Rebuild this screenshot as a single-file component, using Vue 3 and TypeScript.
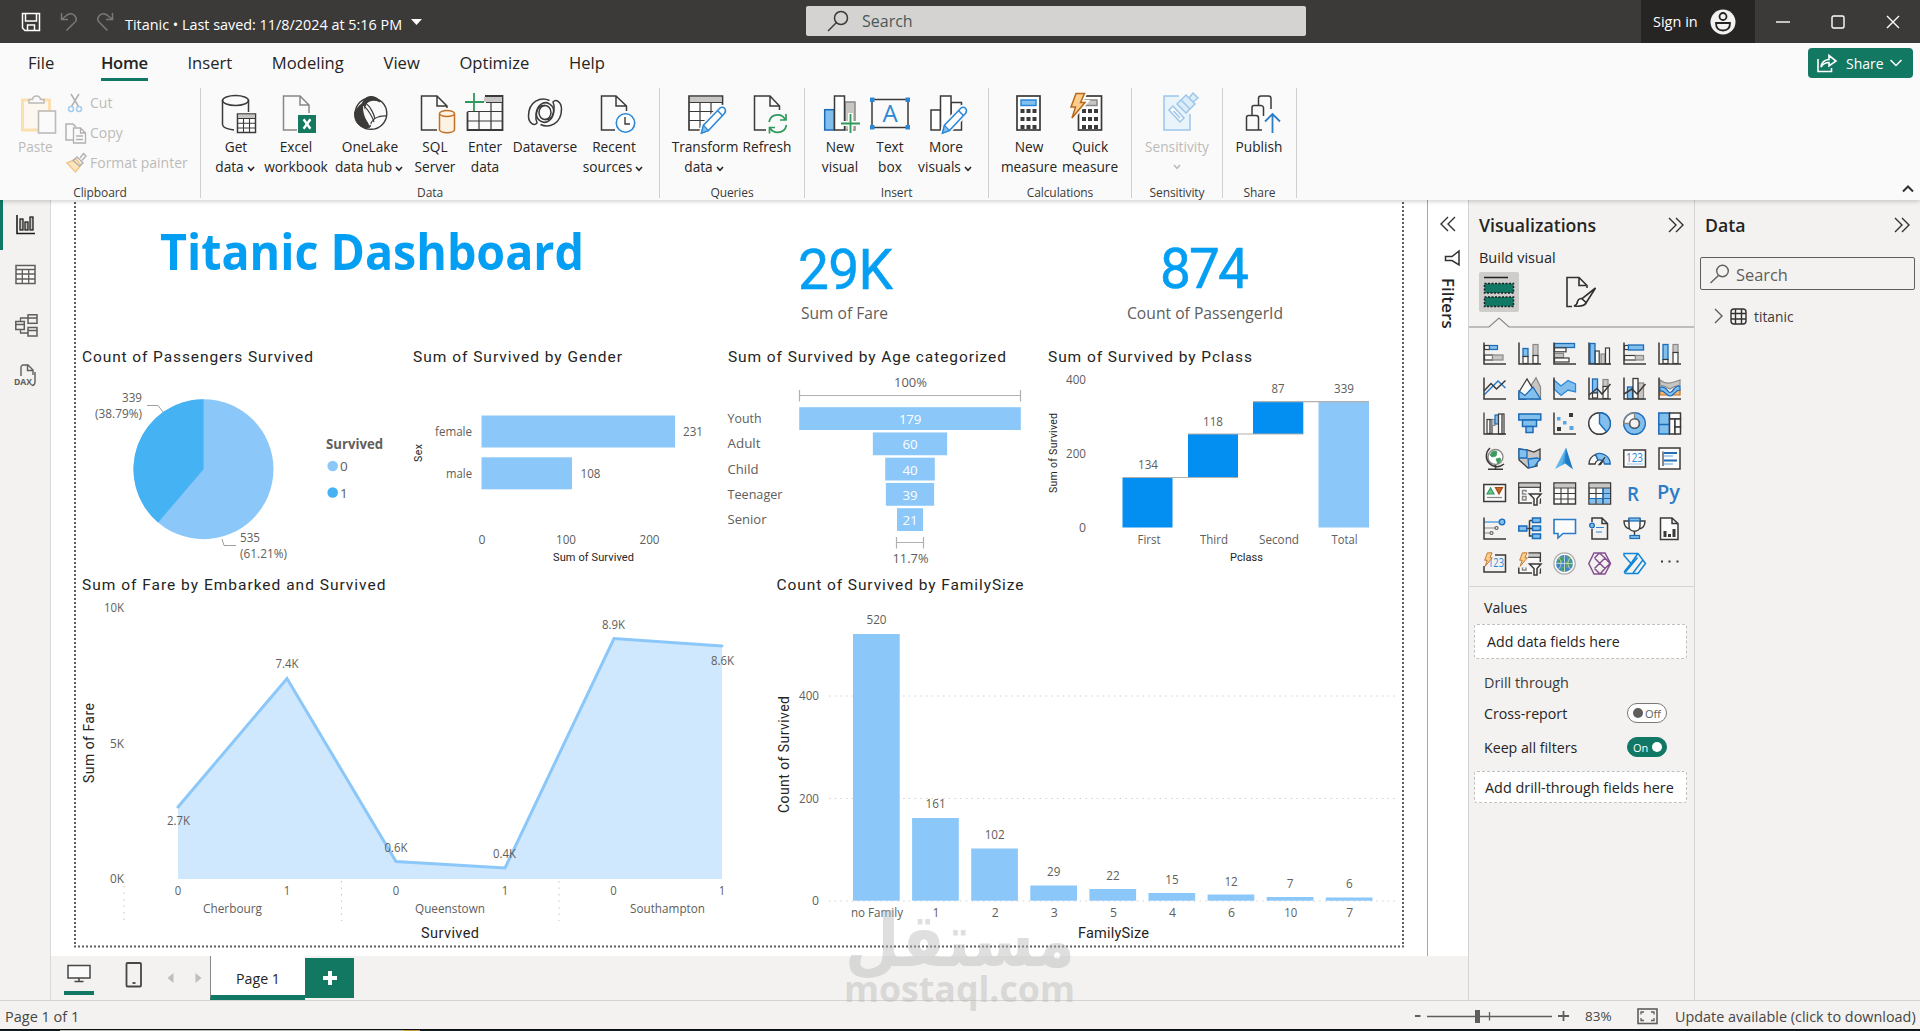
<script setup lang="ts">
interface RibbonItem { icon: string; lines: string[]; w: number; ml: number; caret?: boolean; off?: boolean }
interface RibbonGroup { name: string; w: number; items: RibbonItem[] }

const K = '#3b3a39'
const B = '#1a6bb8'
const LB = '#83bfec'
const G = '#c8c6c4'
const DG = '#8a8886'
const W = '#fbfbfb'

const rect = (x: number, y: number, w: number, h: number, fill = 'none', stroke = 'none', sw = 1.5): string =>
  `<rect x="${x}" y="${y}" width="${w}" height="${h}" fill="${fill}" stroke="${stroke}" stroke-width="${sw}"/>`
const path = (d: string, stroke = K, fill = 'none', sw = 1.5): string =>
  `<path d="${d}" fill="${fill}" stroke="${stroke}" stroke-width="${sw}"/>`
const dot = (x: number, y: number, r: number, fill = 'none', stroke = 'none', sw = 1.5): string =>
  `<circle cx="${x}" cy="${y}" r="${r}" fill="${fill}" stroke="${stroke}" stroke-width="${sw}"/>`

const pencil = path('M18.5 41L20.5 33.2L36.8 16.2Q39.4 14.4 41.6 16.4Q43.4 18.6 41.6 21.2L25.4 38.6Z', '#fafafa', '#fafafa', 5)
  + path('M18.5 41L20.5 33.2L36.8 16.2Q39.4 14.4 41.6 16.4Q43.4 18.6 41.6 21.2L25.4 38.6Z', '#2b88d8', '#fff', 1.5)
  + path('M18.5 41L20.5 33.2L25.4 38.6Z', '#2b88d8', LB, 1.2) + path('M34.5 18.5L39.4 23.6', '#2b88d8')
const keypad = (x: number, y: number): string => {
  let s = ''
  for (let r = 0; r < 3; r++) for (let c = 0; c < 3; c++) s += rect(x + c * 6, y + r * 8, 4, 4, K)
  return s
}
const bolt = (s: number): string =>
  `<g transform="scale(${s})">` + path('M8 1.5H16.5L12.5 10.5H17L4 26L7.5 15H3Z', '#b8681c', '#fbcf8b', 1.5) + '</g>'

const ribbonIcons: Record<string, string> = {
  getdata: path('M8.5 8V32.5Q9 36.8 20 38M34.5 8V20') + `<ellipse cx="21.5" cy="8.5" rx="13" ry="5" fill="none" stroke="${K}" stroke-width="1.5"/>`
    + rect(23.5, 22, 18, 18.5, '#fff', K) + rect(24, 22.5, 17, 3.5, G) + path('M23.5 26.5H41.5M23.5 31.3H41.5M23.5 36H41.5M29.5 26V40M35.5 26V40', K, 'none', 1.1),
  excel: path('M23 38H9.5V4H26L35 13V21M26 4V13H35', DG) + rect(24, 23, 18, 18, '#15795f')
    + path('M29.6 27.2L36.4 36.8M36.4 27.2L29.6 36.8', '#fff', 'none', 2.4),
  onelake: dot(23, 21.5, 15.8, 'none', K, 1.4) + path('M23 4.5C29 4.5 32 9 32 10C27 7 21 8 18 12C15 18 17 28 22 35C19 38 6 35 6.5 21C7 18 12 13 14.5 11C16 7 19 4.5 23 4.5Z', K, K, 1)
    + path('M14 13C19 15 25 26 26 30M22 35C23 27 30 23.5 39 24M18.5 12C22 14 26 22 27 27', K, 'none', 1.2) + path('M15.5 14C15 21 18 29 23 33', '#fafafa', '#fafafa', .8),
  sql: path('M24 38H8.5V4H24L34 14V16M24 4V14H34') + path('M26.5 22V38C28 41.5 40 41.5 41.5 38V22', '#c27022', '#fdf3e4')
    + `<ellipse cx="34" cy="21.5" rx="7.5" ry="3" fill="#fdf3e4" stroke="#c27022" stroke-width="1.5"/>`,
  enter: path('M4.5 20V38H39.5V4H22', K, 'none', 1.8) + rect(21, 5, 18, 5, G) + path('M23 10.5H39M4.5 19.5H39M4.5 29H39M16 19V38M28 10V38', K, 'none', 1.2)
    + path('M11 1V19M2 10H21', '#2f9a5b', 'none', 1.8),
  dataverse: `<g fill="none" stroke="${K}" stroke-width="1.5"><ellipse cx="22" cy="20.5" rx="6" ry="7"/><path d="M26.5 8.5C18 4.5 5.5 9 5.5 24C5.5 31 11 34.5 14 31C12 27 12.5 17 17 13C23 7.5 31.5 13 30.5 20C29.5 27 25 28 22 27.5"/><path d="M17.5 32.5C26 36.5 38.5 32 38.5 17C38.5 10 33 6.5 30 10C32 14 31.5 24 27 28C21 33.5 12.5 28 13.5 21C14.5 14 19 13 22 13.5"/></g>`,
  recent: path('M23 38H9.5V4H24L34.5 14V19M24 4V14H34.5') + dot(33.5, 31, 9.2, '#fff', '#2b88d8', 1.6) + path('M33 25V32H38', K, 'none', 1.4),
  transform: path('M18 38H6V4H39.5V17', K, '#fff', 1.7) + rect(7, 5, 31.5, 5, G) + path('M6 10.5H39.5M6 19.5H36M6 28.5H24M17 10.5V36M28 10.5V24', K, 'none', 1.2) + pencil,
  refresh: path('M21 38H9.5V4H25L34.5 14V18M25 4V14H34.5') + path('M24 30C25 25 28 22.8 32.5 22.8C36 22.8 39 25 40 27.5M41 22V28H35M41.5 33C40.5 38 37 40.3 32.5 40.3C29 40.3 26.5 38.5 25 36M24.5 41.5V35.5H30', '#2f9a5b', 'none', 1.7),
  newvisual: rect(6.7, 17.7, 9.5, 20.3, LB, B) + rect(27, 10, 10, 28, G, DG) + rect(16.5, 4, 10, 34, '#fff', K) + rect(22, 29, 21, 5, '#fafafa') + rect(30, 21, 5, 21, '#fafafa') + path('M32.5 22V41M23 31.5H42', '#2f9a5b', 'none', 1.8),
  textbox: rect(4, 7.5, 36, 28, '#fafafa', K) + rect(2, 5.5, 4.5, 4.5, '#2b88d8') + rect(37.5, 5.5, 4.5, 4.5, '#2b88d8') + rect(2, 33, 4.5, 4.5, '#2b88d8') + rect(37.5, 33, 4.5, 4.5, '#2b88d8')
    + '<text x="22" y="30" font-size="24" text-anchor="middle" fill="#2b88d8" font-family="Open Sans, sans-serif">A</text>',
  morevisuals: rect(7, 18, 9.5, 20, '#fff', K) + rect(27, 10.5, 10.5, 27.5, '#fff', K) + rect(16.5, 4, 10.5, 34, '#fff', K) + pencil,
  measure: rect(10, 4, 23, 34, '#fff', K, 1.7) + rect(14, 8, 15, 5.5, LB, '#2b88d8') + keypad(13.5, 17),
  quick: rect(10.5, 4, 23, 34, '#fff', K, 1.7) + rect(14, 8, 15, 5.5, G, DG) + keypad(14, 17) + path('M8 1.5H16.5L12.5 10.5H17L4 26L7.5 15H3Z', '#fafafa', '#fafafa', 5) + bolt(1),
  sensitivity: `<g opacity=".45">` + path('M24 4H9V38H35V22', '#2b88d8', '#d6ebfa') + path('M14 18L18 14L29 26L25 30Z', '#2b88d8', '#fff') + path('M18.5 19L25 26', '#2b88d8') + path('M22 12L31 3L40 12L31 21ZM26 8L35 17M34 6L38 1L43 6L38 10', '#2b88d8', '#bcdff7') + '</g>',
  publish: path('M25 38H9.5V25.5Q9.5 23.5 11.5 23.5H19Q21.5 23.5 21.5 26V38M15 23V15.5Q15 13.5 17 13.5H24Q26 13.5 26.5 15.5V24M21.5 13V6.5Q21.5 4 24 4H31.5Q34 4 34 6.5V17') + path('M35.5 41V22M28 29.5L35.5 22L43 29.5', '#2b7cc9', 'none', 1.8),
}

const groups: RibbonGroup[] = [
  { name: 'Data', w: 459, items: [
    { icon: 'getdata', lines: ['Get', 'data'], w: 44, ml: 13, caret: true },
    { icon: 'excel', lines: ['Excel', 'workbook'], w: 66, ml: 5 },
    { icon: 'onelake', lines: ['OneLake', 'data hub'], w: 72, ml: 5, caret: true },
    { icon: 'sql', lines: ['SQL', 'Server'], w: 40, ml: 9 },
    { icon: 'enter', lines: ['Enter', 'data'], w: 34, ml: 13 },
    { icon: 'dataverse', lines: ['Dataverse'], w: 64, ml: 11 },
    { icon: 'recent', lines: ['Recent', 'sources'], w: 62, ml: 6, caret: true },
  ] },
  { name: 'Queries', w: 145, items: [
    { icon: 'transform', lines: ['Transform', 'data'], w: 64, ml: 13, caret: true },
    { icon: 'refresh', lines: ['Refresh'], w: 50, ml: 5 },
  ] },
  { name: 'Insert', w: 184, items: [
    { icon: 'newvisual', lines: ['New', 'visual'], w: 36, ml: 17 },
    { icon: 'textbox', lines: ['Text', 'box'], w: 30, ml: 17 },
    { icon: 'morevisuals', lines: ['More', 'visuals'], w: 58, ml: 12, caret: true },
  ] },
  { name: 'Calculations', w: 143, items: [
    { icon: 'measure', lines: ['New', 'measure'], w: 56, ml: 12 },
    { icon: 'quick', lines: ['Quick', 'measure'], w: 56, ml: 5 },
  ] },
  { name: 'Sensitivity', w: 91, items: [
    { icon: 'sensitivity', lines: ['Sensitivity', ''], w: 68, ml: 11, caret: true, off: true },
  ] },
  { name: 'Share', w: 74, items: [
    { icon: 'publish', lines: ['Publish'], w: 50, ml: 11 },
  ] },
]

const tabs: string[] = ['File', 'Home', 'Insert', 'Modeling', 'View', 'Optimize', 'Help']

const railIcons: string[] = [
  path('M2 1V19.5H20', '#201f1e', 'none', 1.6) + rect(5, 5, 3, 11, G, '#201f1e', 1.3) + rect(10, 8, 3, 8, G, '#201f1e', 1.3) + rect(15, 3, 3, 13, G, '#201f1e', 1.3),
  rect(1, 1.5, 19, 18, '#fafafa', '#605e5c', 1.5) + path('M1 5.5H20M1 10H20M1 15H20M7.3 5V19M13.7 5V19', '#605e5c', 'none', 1.3),
  rect(.8, 7.5, 8.5, 8, 'none', '#605e5c') + rect(13, .8, 9, 8.5, 'none', '#605e5c') + rect(13, 13.5, 9, 8.5, 'none', '#605e5c') + path('M1 10.5H9M13 4H22M13 16.5H22M5.5 7V4H13M5.5 15.5V19H13', '#605e5c', 'none', 1.3),
  path('M6 12V3.5Q6 1 8.5 1H13L18 6V11M12.5 1V6.5H18M20 8V18Q20 21.5 16.500 21.500', '#605e5c', 'none', 1.4) + '<text x="-1" y="21" font-size="9" font-weight="700" textLength="18" lengthAdjust="spacingAndGlyphs" fill="#605e5c" font-family="Open Sans, sans-serif">DAX</text>',
]

const axis = path('M1 .5V22H23')
const cardText = (x: number, w: number): string => `<text x="${x}" y="14.5" font-size="12" textLength="${w}" lengthAdjust="spacingAndGlyphs" fill="#2b88d8" font-family="Open Sans, sans-serif">123</text>`
const slicer = rect(.8, 1, 21.5, 20, W, K) + rect(1.5, 1.7, 20, 3, G) + path('M1 5.3H22', K, 'none', 1.2) + rect(4.5, 8.5, 3.5, 3.5, 'none', DG) + rect(4.5, 14.5, 3.5, 3.5, 'none', DG)
  + path('M11 12H23.5L19.5 17V23.5H16V17Z', '#f3f2f1', '#f3f2f1', 4) + path('M11.5 12H23L19 16.5V23H16V16.5Z', K, W)

const vizIcons: string[] = [
  rect(1.5, 3.5, 5, 4, W, K, 1.2) + rect(6.5, 3.5, 8, 4, LB, B, 1.2) + rect(1.5, 13, 8, 5, W, K, 1.2) + rect(9.5, 13, 10.5, 5, G, DG, 1.2) + axis,
  rect(5, 6.5, 5, 8, LB, B, 1.3) + rect(5, 14.5, 5, 7, W, K, 1.2) + rect(15, 2.5, 5, 11, G, DG, 1.2) + rect(15, 13.5, 5, 8, W, K, 1.2) + axis,
  rect(1.5, 1.5, 20, 4, LB, B, 1.3) + rect(1.5, 5.8, 11.5, 4, W, K, 1.2) + rect(1.5, 11.5, 9, 4, G, DG, 1.2) + rect(1.5, 16, 14.5, 4, W, K, 1.2) + axis,
  rect(2, 1.5, 5, 20, LB, B, 1.3) + rect(7.2, 9, 4, 13, W, K, 1.2) + rect(13, 12, 4, 10, G, DG, 1.2) + rect(17.5, 6, 4, 16, W, K, 1.2) + axis,
  rect(1.5, 3.5, 4, 4, W, K, 1.2) + rect(5.5, 3, 15, 5, LB, B, 1.3) + rect(1.5, 13.5, 11, 4.5, W, K, 1.2) + rect(12.5, 13.5, 8, 4.5, G, DG, 1.2) + axis,
  rect(5, 2.5, 5, 15, LB, B, 1.3) + rect(5, 17.5, 5, 4, W, K, 1.2) + rect(15, 2.5, 5, 8, G, DG, 1.2) + rect(15, 10.5, 5, 11, W, K, 1.2) + axis,

  path('M1 18L15 4L22.5 11', '#2b7cc9') + path('M1 14L8 6.5L13.5 12L22.5 3.5') + axis,
  path('M12 10L18 .8L22.5 10V22H12Z', DG, G, 1.2) + path('M1 15L9 2L15 12L8 22H1Z', K, W, 1.3) + path('M1 14L7 18.5L15 10L22.5 22H1Z', B, LB, 1.3),
  path('M1 3L8 9L15 3.5L22.5 7V15L15 13L8 18.5L1 12Z', '#2b88d8', LB, 1.3) + axis,
  rect(4.5, 2, 5, 14, LB, B, 1.3) + rect(4.5, 16, 5, 5, W, K, 1.2) + rect(15, 2.5, 5, 7, G, DG, 1.2) + rect(15, 9.5, 5, 12, W, K, 1.2) + path('M1 18L9 11.5L14 17L22.5 7') + axis,
  rect(4.5, 10, 5, 12, LB, B, 1.3) + rect(15, 6, 5.5, 16, G, DG, 1.2) + rect(10, 1.5, 5, 20, W, K, 1.3) + path('M1 17L9 12L14 17L22.5 7') + axis,
  path('M2 13H8L12 17L16 12L22 13V18H2Z', '#c27022', '#f5b878', 1.2) + path('M2 3Q7 7 12 6T22 3V8Q16 9 12 12Q7 9 2 8Z', DG, G, 1.2) + path('M2 10C9 9 9 15 12 15.5C16 15.5 15 8.5 22 9V13C17 12.5 17 18.5 12 19C7 18.5 7 13 2 14Z', B, LB, 1.2) + axis,

  rect(4, 7.5, 5, 14, W, K, 1.2) + rect(9, 7.5, 3, 6, G, DG, 1) + rect(12, 3, 3.5, 9, LB, B, 1.2) + rect(15.5, 2, 5.5, 20, W, K, 1.2) + path('M1 .5V22H23M7 7V22M19 2V22', K, 'none', 1.3),
  rect(.8, 2, 22, 6, LB, B) + rect(4.5, 8, 14, 6.5, LB, B) + rect(8, 14.5, 7, 6, LB, B),
  rect(16, 1, 4, 4, K) + rect(4, 15, 4, 4, K) + rect(4, 5, 3.5, 3.5, '#5aa5e0') + rect(10, 9, 3.5, 3.5, '#5aa5e0') + rect(16.5, 14, 4, 4, '#5aa5e0') + axis,
  dot(11.5, 11.5, 10.8, W, K, 1.4) + path('M11.5 .8A10.7 10.7 0 0 1 18.5 19.7L11.5 11.5Z', B, LB, 1.4),
  dot(11.5, 11.5, 8, 'none', B, 7) + dot(11.5, 11.5, 8, 'none', LB, 4.5) + path('M11.5 1V7A4.5 4.5 0 0 0 6.5 11.5H1A10.5 10.5 0 0 1 11.5 1Z', DG, W, 1.3) + dot(11.5, 11.5, 4.7, '#f3f2f1', '#555', 1.2),
  rect(.8, 1, 10.7, 21, LB, B) + rect(11.5, 1, 11, 6, W, K) + rect(11.5, 7, 5.5, 15, W, K) + rect(17, 7, 5.5, 8, W, K) + rect(17, 15, 5.5, 7, W, K) + path('M1 12.5H11', B),

  dot(12.5, 10, 7.5, '#fff', DG, 1.3) + path('M9 5Q12 3 14 5L13 9L9 10L7 8ZM13 12L17 11L18 13L15 17Z', '#3c9a5f', '#3c9a5f', .8) + path('M7 1A10.5 10.5 0 1 0 21 17M12.5 18V22M5 22.3H20'),
  path('M1 2L9 3L16 5L22 2V13L19 15V19L10 21L1 13Z', K, G, 1.3) + path('M1 2L9 3V11H1Z', B, LB, 1.3) + path('M10 12L19 11L22 12L17 19L11 21Z', B, LB, 1.3),
  path('M13 .5L2 22L12.5 16.5Z', 'none', '#5fb7ee') + path('M13 .5L20 22.5L11 15.5Z', 'none', '#1f7cc4') + path('M13 .5L9 18L12 16Z', 'none', '#3c9bdd'),
  path('M1 17A10.5 10.5 0 0 1 7.5 7.5L10 13Q7.5 14.5 7 17Z', K, W, 1.3) + path('M7.5 7.3A10.8 10.8 0 0 1 22.3 17H16.5Q15.5 12.5 10 13Z', B, LB, 1.3) + path('M10.5 18L17 10L13 17.5Z', K, K, 1),
  rect(.8, 3, 21.7, 17, W, K) + cardText(3, 17) + path('M4 17H20', '#9dc8ea', 'none', 1),
  rect(1, 1, 21, 21, W, K) + path('M5 4.5V19', K, 'none', 1.2) + path('M6 6H19M6 13.5H19', '#1f6db5', 'none', 2) + path('M6 9H15M6 17H15', '#5aa5e0', 'none', 1.2),

  rect(.8, 2.5, 21.7, 17, W, K) + path('M4 12L7.5 6L11 12Z', '#2f9a5b', '#6fc08d', 1.2) + path('M12.5 5.5H19.5L16 12Z', '#a44a10', '#c9642a', 1.2) + path('M4 15.5H19', '#8a8886', 'none', 1.2),
  slicer,
  rect(1, 1, 21.5, 21, W, K) + rect(1.7, 1.7, 20, 4, G) + path('M1 6H22M1 11.5H22M1 17H22M8 6V22M15 6V22', K, 'none', 1.1),
  rect(1, 1, 21.5, 21, W, K) + rect(1.7, 1.7, 20, 4, G) + rect(15, 6, 7, 11, LB) + rect(1.7, 17, 20, 4.5, LB) + path('M1 6H22M1 11.5H15M8 6V22M15 6V22M1 16.5H15', K, 'none', 1.1) + path('M1.5 16.5H22M15 6V22M15 11.5H22', B, 'none', 1.1),
  '<text x="4" y="18.5" font-size="20" font-weight="600" textLength="12" lengthAdjust="spacingAndGlyphs" fill="#2b7cc9" font-family="Open Sans, sans-serif">R</text>',
  '<text x="-1" y="17" font-size="20" font-weight="600" textLength="23" lengthAdjust="spacingAndGlyphs" fill="#2b7cc9" font-family="Open Sans, sans-serif">Py</text>',

  path('M1 5H16', '#5aa5e0') + dot(19, 5, 2.8, LB, B, 1.3) + path('M1 11H12M1 16H7', DG, 'none', 1.2) + dot(13.5, 11, 1.5, 'none', '#605e5c', 1.2) + dot(8.5, 16, 1.5, 'none', '#605e5c', 1.2) + axis,
  path('M9 11.5H14M11.5 3.5V19H14M11.5 3.5H14', K) + rect(.8, 9, 8, 5, LB, B) + rect(14.5, 1, 8, 4.5, LB, B) + rect(14.5, 9, 8, 4.500, LB, B) + rect(14.500, 17, 8, 4.500, LB, B),
  path('M1 2.5H22.5V16.5H10L5 21V16.5H1Z', '#2b7cc9', W, 1.6),
  path('M4 5V1H14L19.5 6.5V22H4V12M14 1V6.5H19.5') + dot(4, 8.5, 2.3, LB, B, 1.3) + path('M8 10.5H16M8 15H14', '#2b88d8', 'none', 1.2),
  path('M6 2H17V9C17 16 6 16 6 9ZM6 4H1Q1 11 7 12M17 4H22Q22 11 16 12M11.5 14.5V18', K, W, 1.4) + rect(6, 1, 11, 3, LB, B, 1.2) + rect(7, 18.5, 9.5, 3, LB, B, 1.2),
  path('M2.500 1H14L20 6.500V22.500H2.500ZM14 1V6.500H20', K, W) + rect(5.5, 14, 3, 6, K) + rect(10, 17, 3, 3, K) + rect(14.5, 12, 3, 8, K),

  path('M12 3H22.5V20H1V14') + cardText(5, 16) + bolt(.55),
  slicer + path('M0 0H9L8 14H0Z', '#f3f2f1', '#f3f2f1', 3) + bolt(.55),
  dot(11.5, 11.5, 10.7, '#fff', '#b3b0ad', 1.3) + dot(11.5, 11.5, 8.5, '#3f86c6') + path('M7 5L11 6L8 11L4 10ZM13 10L18 9L19 13L14 16ZM8 16L11 15L12 19L9 19ZM14 4L18 6L15 8Z', '#6dae6b', '#3c9a5f', .8) + path('M3 11.5H20M11.5 3V20M5 5Q11.5 11 5 18M18 5Q11.5 11 18 18', '#e8e8e8', 'none', .7),
  path('M6 1H17L22.5 11.5L17 22H6L.8 11.5ZM6.5 6L11.5 1M6.5 6L17 16.5M17 6L6.5 16.5M17 6L12 1.5M6.5 16.5L12 22M17 16.5L12 22M17 6L22 11.5L17 16.5', '#85508f', 'none', 1.5),
  path('M1 1.5H15L22.5 11.5L15 21.500H3Q.5 21 2 18.800L8 11.500L1 3.500ZM2.500 20L14.500 5.500M10 21L19.500 8.500M8 11.500L14.500 2', '#0f86d8', 'none', 1.5),
  rect(3, 8.5, 2, 2, '#32363c') + rect(10.5, 8.5, 2, 2, '#32363c') + rect(18.5, 8.5, 2, 2, '#32363c'),
]

/* Report canvas data */
interface Label { t: string; x: number; y: number; w: number; a?: string; s?: number }
const chartTitles: Label[] = [
  { t: 'Count of Passengers Survived', x: 82, y: 361.5, w: 231 },
  { t: 'Sum of Survived by Gender', x: 413, y: 361.5, w: 209 },
  { t: 'Sum of Survived by Age categorized', x: 728, y: 361.5, w: 278 },
  { t: 'Sum of Survived by Pclass', x: 1048, y: 361.5, w: 204 },
  { t: 'Sum of Fare by Embarked and Survived', x: 82, y: 590, w: 303.5 },
  { t: 'Count of Survived by FamilySize', x: 776.5, y: 590, w: 247 },
]
const axisTitles: Label[] = [
  { t: 'Sum of Survived', x: 553, y: 560.5, w: 81, s: 11 },
  { t: 'Pclass', x: 1230, y: 560.5, w: 33, s: 11 },
  { t: 'Survived', x: 421, y: 938, w: 58, s: 14.5 },
  { t: 'FamilySize', x: 1078, y: 938, w: 71, s: 14.5 },
]
const rotated: Label[] = [
  { t: 'Sex', x: 422, y: 462, w: 18, s: 10.5 },
  { t: 'Sum of Survived', x: 1057, y: 493, w: 80, s: 10.5 },
  { t: 'Sum of Fare', x: 94, y: 783, w: 80, s: 14 },
  { t: 'Count of Survived', x: 789, y: 813, w: 117, s: 14 },
]
const small: Label[] = [
  { t: '339', x: 142, y: 402, w: 20, a: 'end' }, { t: '(38.79%)', x: 142, y: 418, w: 47, a: 'end' },
  { t: '535', x: 240, y: 542, w: 20, a: 'start' }, { t: '(61.21%)', x: 240, y: 558, w: 47, a: 'start' },
  { t: 'female', x: 472, y: 436, w: 37, a: 'end' }, { t: 'male', x: 472, y: 478, w: 26, a: 'end' },
  { t: '231', x: 683, y: 436, w: 20, a: 'start' }, { t: '108', x: 580.5, y: 478, w: 20, a: 'start' },
  { t: '0', x: 482, y: 544, w: 7 }, { t: '100', x: 566, y: 544, w: 20 }, { t: '200', x: 649.5, y: 544, w: 20 },
  { t: '400', x: 1086, y: 384, w: 20, a: 'end' }, { t: '200', x: 1086, y: 458, w: 20, a: 'end' }, { t: '0', x: 1086, y: 532, w: 7, a: 'end' },
  { t: '134', x: 1148, y: 469, w: 20 }, { t: '118', x: 1213, y: 426, w: 20 }, { t: '87', x: 1278, y: 393, w: 13 }, { t: '339', x: 1344, y: 393, w: 20 },
  { t: 'First', x: 1149, y: 544, w: 23 }, { t: 'Third', x: 1214, y: 544, w: 28 }, { t: 'Second', x: 1279, y: 544, w: 40 }, { t: 'Total', x: 1344.5, y: 544, w: 26 },
  { t: '10K', x: 124, y: 612, w: 20, a: 'end' }, { t: '5K', x: 124, y: 748, w: 14, a: 'end' }, { t: '0K', x: 124, y: 883, w: 14, a: 'end' },
  { t: '2.7K', x: 178.5, y: 825, w: 23 }, { t: '7.4K', x: 287, y: 668, w: 23 }, { t: '0.6K', x: 396, y: 852, w: 23 },
  { t: '0.4K', x: 504.5, y: 858, w: 23 }, { t: '8.9K', x: 613.5, y: 629, w: 23 }, { t: '8.6K', x: 722.5, y: 665, w: 23 },
  { t: '0', x: 178, y: 895, w: 6.5 }, { t: '1', x: 287, y: 895, w: 6.5 }, { t: '0', x: 396, y: 895, w: 6.5 },
  { t: '1', x: 505, y: 895, w: 6.5 }, { t: '0', x: 613.5, y: 895, w: 6.5 }, { t: '1', x: 722, y: 895, w: 6.5 },
  { t: 'Cherbourg', x: 232.5, y: 913, w: 59 }, { t: 'Queenstown', x: 450, y: 913, w: 70 }, { t: 'Southampton', x: 667.5, y: 913, w: 75 },
  { t: '400', x: 819, y: 700, w: 20, a: 'end' }, { t: '200', x: 819, y: 803, w: 20, a: 'end' }, { t: '0', x: 819, y: 905, w: 7, a: 'end' },
]
const funnel = [
  { t: 'Youth', v: 179, w: 34 }, { t: 'Adult', v: 60, w: 33 }, { t: 'Child', v: 40, w: 31 }, { t: 'Teenager', v: 39, w: 55 }, { t: 'Senior', v: 21, w: 39 },
]
const family = [
  { t: 'no Family', v: 520, top: 634, ly: 624, w: 52 }, { t: '1', v: 161, top: 818, ly: 808, w: 7 }, { t: '2', v: 102, top: 848.5, ly: 839, w: 7 },
  { t: '3', v: 29, top: 885.5, ly: 876, w: 7 }, { t: '5', v: 22, top: 889, ly: 880, w: 7 }, { t: '4', v: 15, top: 893, ly: 883.5, w: 7 },
  { t: '6', v: 12, top: 894.5, ly: 885.5, w: 7 }, { t: '10', v: 7, top: 897, ly: 888, w: 13 }, { t: '7', v: 6, top: 897.5, ly: 888, w: 7 },
]
</script>

<template>
  <div class="app">
    <header class="titlebar">
      <div class="doc">
        <svg class="save" width="20" height="20" fill="none" stroke="#fff" stroke-width="1.5"><path d="M1.5 1.5H18.5V18.5H4L1.5 16ZM4.5 1.5V9H15.5V1.5M6.5 18.5V13H13.5V18.5" /></svg>
        <svg class="undo" width="20" height="20" fill="none" stroke="#7b7977" stroke-width="1.5"><path d="M2.5 1V7.5H9M2.5 7.5L8 3Q13 0 16 4T15 11L7.5 18.5" /></svg>
        <svg class="redo" width="20" height="20" fill="none" stroke="#7b7977" stroke-width="1.5"><path d="M17.5 1V7.5H11M17.5 7.5L12 3Q7 0 4 4T5 11L12.5 18.5" /></svg>
        <span class="docname">Titanic • Last saved: 11/8/2024 at 5:16 PM</span>
        <svg width="12" height="6"><path d="M0 0H11L5.5 6Z" fill="#fff" /></svg>
      </div>
      <div class="search">
        <svg width="22" height="22" fill="none" stroke="#3b3a39" stroke-width="1.5"><circle cx="14" cy="8" r="6.5" /><path d="M9.5 12.5L1 21" /></svg>
        <span>Search</span>
      </div>
      <div class="signin">
        <span>Sign in</span>
        <svg width="26" height="26"><circle cx="13" cy="13" r="12.5" fill="#f3f2f1" /><circle cx="13" cy="7.5" r="3.5" fill="none" stroke="#252423" stroke-width="1.8" /><path d="M6 14H20Q20 21.5 13 21.5T6 14Z" fill="none" stroke="#252423" stroke-width="1.8" /></svg>
      </div>
      <div class="winbtns">
        <svg width="14" height="14" stroke="#fff" stroke-width="1.4"><path d="M0 7H14" /></svg>
        <svg width="14" height="14" fill="none" stroke="#fff" stroke-width="1.4"><rect x="1" y="1" width="12" height="12" rx="1.5" /></svg>
        <svg width="14" height="14" fill="none" stroke="#fff" stroke-width="1.4"><path d="M1 1L13 13M13 1L1 13" /></svg>
      </div>
    </header>

    <nav class="tabs">
      <span v-for="t in tabs" :key="t" class="tab" :class="{ active: t === 'Home' }">{{ t }}</span>
      <button class="share">
        <svg width="22" height="20" fill="none" stroke="#fff" stroke-width="1.6"><path d="M2 6V18.5H15.5V15M5 14Q6 7 13 6.5V2.5L20 8L13 13V9.5Q8 9.5 5 14Z" /></svg>
        <span>Share</span>
        <svg width="12" height="8" fill="none" stroke="#fff" stroke-width="1.5"><path d="M.5 1L6 6.5L11.5 1" /></svg>
      </button>
    </nav>

    <section class="ribbon">
      <div class="group clip">
        <div class="cliprow">
          <div class="paste">
            <svg width="40" height="44" fill="none">
              <rect x="4.5" y="8" width="27" height="30" fill="#fdf8ef" stroke="#fbdfae" stroke-width="3" />
              <path d="M11 11V7.5H14.5Q15 4 18.5 4T22.5 7.5H26V11Z" fill="#fafafa" stroke="#bdbbb9" stroke-width="1.5" />
              <rect x="20.5" y="19" width="17" height="22" fill="#fafafa" stroke="#bdbbb9" stroke-width="1.6" />
            </svg>
            <span>Paste</span>
          </div>
          <div class="clipactions">
            <div><svg width="22" height="22" fill="none" stroke="#b3b1af" stroke-width="1.5"><path d="M6 2L13.5 14.5M14 2L6.5 14.5" /><circle cx="6" cy="17" r="2.5" stroke="#a3cdec" /><circle cx="14" cy="17" r="2.5" stroke="#a3cdec" /></svg><span>Cut</span></div>
            <div><svg width="22" height="22" fill="none" stroke="#b3b1af" stroke-width="1.5"><path d="M8 18H1V2H8L11 5" /><path d="M8.5 6H15.5L20.5 11V21H8.5ZM15.5 6V11H20.5M11 14H18M11 17.5H18" stroke-width="1.3" /></svg><span>Copy</span></div>
            <div><svg width="22" height="22" fill="none" stroke="#b3b1af" stroke-width="1.4"><path d="M2 11L11 7L16 13L10.5 20Z" fill="#fde6bf" stroke="#efc585" /><path d="M8 8.5L12 5L18 11L14.5 14ZM15 6L18.5 1.5L21 4L17 8.5" /></svg><span>Format painter</span></div>
          </div>
        </div>
        <div class="gname">Clipboard</div>
      </div>
      <div v-for="g in groups" :key="g.name" class="group" :style="{ width: g.w + 'px' }">
        <div class="items">
          <div v-for="i in g.items" :key="i.icon" class="item" :class="{ off: i.off }" :style="{ width: i.w + 'px', marginLeft: i.ml + 'px' }">
            <svg class="big" width="44" height="44" v-html="ribbonIcons[i.icon]"></svg>
            <span v-for="(l, n) in i.lines" :key="n" class="line">{{ l }}<svg v-if="i.caret && n === 1" class="chev" :class="{ lone: !l }" width="8" height="6" fill="none" stroke="currentColor" stroke-width="1.6"><path d="M1 1L4 4.3L7 1" /></svg></span>
          </div>
        </div>
        <div class="gname">{{ g.name }}</div>
      </div>
      <svg class="collapse" width="12" height="8" fill="none" stroke="#323130" stroke-width="2"><path d="M1 6.5L6 1.5L11 6.5" /></svg>
    </section>

    <main class="main">
      <aside class="rail">
        <div v-for="(ic, n) in railIcons" :key="n" class="railbtn" :class="{ active: n === 0 }">
          <svg width="23" height="23" v-html="ic"></svg>
        </div>
      </aside>

      <div class="center">
        <div class="stage">
          <svg class="canvas" width="1376" height="756" viewBox="51 200 1376 756">
            <g stroke="#605e5c" stroke-width="2" stroke-dasharray="2 2" fill="none">
              <path d="M75 202V946M1403 202V946M74 946.5H1404" />
            </g>
            <text class="hero" x="160" y="270" textLength="424" lengthAdjust="spacingAndGlyphs">Titanic Dashboard</text>
            <text class="kpi" x="798" y="288.5" textLength="95" lengthAdjust="spacing">29K</text>
            <text class="kpi" x="1160" y="288" textLength="89" lengthAdjust="spacing">874</text>
            <text class="kpiname" x="801" y="319" textLength="87" lengthAdjust="spacingAndGlyphs">Sum of Fare</text>
            <text class="kpiname" x="1127" y="319" textLength="156" lengthAdjust="spacingAndGlyphs">Count of PassengerId</text>

            <text v-for="c in chartTitles" :key="c.t" class="ctitle" :x="c.x" :y="c.y" :textLength="c.w" lengthAdjust="spacing">{{ c.t }}</text>
            <text v-for="c in axisTitles" :key="c.t" class="atitle" :x="c.x" :y="c.y" :font-size="c.s" :textLength="c.w" lengthAdjust="spacing">{{ c.t }}</text>
            <text v-for="c in rotated" :key="c.t" class="atitle" :transform="`translate(${c.x} ${c.y}) rotate(-90)`" :font-size="c.s" :textLength="c.w" lengthAdjust="spacing">{{ c.t }}</text>

            <!-- pie -->
            <circle cx="203.5" cy="469.2" r="70" fill="#8bc7f8" />
            <path d="M203.5 469.2V399.2A70 70 0 0 0 158.1 522.5Z" fill="#45b2f4" />
            <path d="M147 405.5H158L163 412M222 539L224 545.5H236" fill="none" stroke="#a19f9d" />
            <text class="legend strong" x="326" y="449" textLength="57" lengthAdjust="spacingAndGlyphs">Survived</text>
            <circle cx="332.7" cy="466" r="5.3" fill="#8bc7f8" /><text class="legend" x="340" y="471">0</text>
            <circle cx="332.7" cy="492.5" r="5.3" fill="#45b2f4" /><text class="legend" x="340" y="498">1</text>

            <!-- gender bars -->
            <rect x="481.5" y="415.5" width="193.500" height="32" fill="#8bc7f8" />
            <rect x="481.5" y="457.3" width="90.5" height="32" fill="#8bc7f8" />

            <!-- funnel -->
            <path d="M799.5 390V401.5M1020.5 390V401.5M799.5 395.5H1020.5M896.5 537V548.5M923.5 537V548.5M896.5 542.5H923.5" stroke="#b3b0ad" fill="none" stroke-width="1.2" />
            <text class="fcat" x="910.5" y="387" text-anchor="middle" textLength="33" lengthAdjust="spacingAndGlyphs">100%</text>
            <text class="fcat" x="910.5" y="562.5" text-anchor="middle" textLength="36" lengthAdjust="spacingAndGlyphs">11.7%</text>
            <g v-for="(f, n) in funnel" :key="f.t">
              <rect :x="910 - f.v * 0.619" :y="407.2 + n * 25.25" :width="f.v * 1.238" height="22.8" fill="#8bc7f8" />
              <text class="fcat" x="727.5" :y="423 + n * 25.25" :textLength="f.w" lengthAdjust="spacingAndGlyphs">{{ f.t }}</text>
              <text class="fval" x="910" :y="424 + n * 25.25" text-anchor="middle">{{ f.v }}</text>
            </g>

            <!-- waterfall -->
            <rect x="1122.5" y="478" width="50" height="49.5" fill="#028ff1" />
            <rect x="1188" y="434" width="50" height="43.5" fill="#028ff1" />
            <rect x="1253" y="402" width="50.3" height="32" fill="#028ff1" />
            <rect x="1318.5" y="402" width="50.5" height="125.5" fill="#8bc7f8" />
            <path d="M1122.5 477.5H1238M1188 434H1303.5M1253 401.7H1369" stroke="#b3b0ad" stroke-width="1.2" />

            <!-- fare area -->
            <path d="M178 807L287 678.5L396 861.5L505 868L614 638.5L722 646V879H178Z" fill="#d0e8fd" />
            <path d="M178 807L287 678.5L396 861.5L505 868L614 638.5L722 646" fill="none" stroke="#8bc7f8" stroke-width="3" stroke-linecap="round" />
            <path d="M124 886V921M341.5 881V921M559 881V921" stroke="#c8c6c4" stroke-dasharray="1.5 5" fill="none" />

            <!-- family bars -->
            <path d="M829 696H1399M829 798.5H1399M829 901H1399" stroke="#d2d0ce" stroke-dasharray="1.5 4.2" fill="none" />
            <g v-for="(f, n) in family" :key="f.t">
              <rect :x="853 + n * 59.1" :y="f.top" width="46.7" :height="900.7 - f.top" fill="#8bc7f8" />
              <text class="tick" :x="876.5 + n * 59.1" :y="f.ly" text-anchor="middle" :textLength="String(f.v).length * 6.7" lengthAdjust="spacingAndGlyphs">{{ f.v }}</text>
              <text class="tick" :x="877 + n * 59.1" y="917" text-anchor="middle" :textLength="f.w" lengthAdjust="spacingAndGlyphs">{{ f.t }}</text>
            </g>

            <text v-for="(c, n) in small" :key="n" class="tick" :x="c.x" :y="c.y" :text-anchor="c.a ?? 'middle'" :textLength="c.w" lengthAdjust="spacingAndGlyphs">{{ c.t }}</text>
          </svg>
          <div class="filters">
            <svg width="16" height="16" fill="none" stroke="#323130" stroke-width="1.4"><path d="M8 1L1 8L8 15M15 1L8 8L15 15" /></svg>
            <svg class="funnelicon" width="16" height="16" fill="none" stroke="#323130" stroke-width="1.5"><path d="M15 1V15L8 10.5H1.5V6.5H8Z" /></svg>
            <span>Filters</span>
          </div>
        </div>
        <div class="pages">
          <div class="monitor"><svg width="24" height="20" fill="none" stroke="#484644" stroke-width="1.5"><rect x="1" y="1.5" width="22" height="12.5" fill="#fafafa" /><path d="M12 14V17.5M7.5 17.5H16.5" /></svg></div>
          <svg class="phone" width="18" height="26" fill="none" stroke="#484644" stroke-width="1.8"><rect x="1.5" y="1" width="14.5" height="23.5" rx="1" /><path d="M7.5 21H10.5" /></svg>
          <svg class="prev" width="7" height="12"><path d="M6.5 1V11L.5 6Z" fill="#c0bebc" /></svg>
          <svg class="next" width="7" height="12"><path d="M.5 1V11L6.5 6Z" fill="#c0bebc" /></svg>
          <div class="page">Page 1</div>
          <button class="add"><svg width="14" height="14" stroke="#fff" stroke-width="4"><path d="M7 0V14M0 7H14" /></svg></button>
        </div>
      </div>

      <aside class="viz">
        <div class="panehead"><span class="ph1">Visualizations</span><svg width="16" height="16" fill="none" stroke="#323130" stroke-width="1.4"><path d="M1 1L8 8L1 15M8 1L15 8L8 15" /></svg></div>
        <div class="build">Build visual</div>
        <div class="modes">
          <div class="mode on"><svg width="40" height="40"><path d="M5 5.5H29" stroke="#201f1e" stroke-width="1.5" /><g fill="#117865" stroke="#201f1e" stroke-width="1.5" stroke-dasharray="2 1.5"><rect x="5.5" y="11.5" width="29" height="9.5" /><rect x="5.5" y="25" width="29" height="9.5" /></g></svg></div>
          <div class="mode"><svg width="40" height="40" fill="none" stroke="#323130" stroke-width="1.6"><path d="M9 34.5H6V5.5H18L26 13.5V16M18 5.5V13.5H25M6 34.5H11" /><path d="M34.5 16L25 31L20.5 27Z" fill="#f3f2f1" /><path d="M20.5 26.5L25 30.5Q24 35 13 34Q16.5 32.5 16.5 29.5Q17.5 26.5 20.5 26.5Z" fill="#fff" /></svg></div>
        </div>
        <svg class="notch" width="225" height="11" fill="none" stroke="#8a8886" stroke-width="1.2"><path d="M0 10H20L30 1L40 10H225" /></svg>
        <div class="grid">
          <svg v-for="(ic, n) in vizIcons" :key="n" width="24" height="24" v-html="ic"></svg>
        </div>
        <div class="fields">
          <div class="label values">Values</div>
          <div class="well w1">Add data fields here</div>
          <div class="label drill">Drill through</div>
          <div class="opt"><span>Cross-report</span><span class="toggle"><i></i>Off</span></div>
          <div class="opt"><span>Keep all filters</span><span class="toggle on">On<i></i></span></div>
          <div class="well w2">Add drill-through fields here</div>
        </div>
      </aside>

      <aside class="data">
        <div class="panehead"><span>Data</span><svg width="16" height="16" fill="none" stroke="#323130" stroke-width="1.4"><path d="M1 1L8 8L1 15M8 1L15 8L8 15" /></svg></div>
        <div class="dsearch">
          <svg width="20" height="20" fill="none" stroke="#605e5c" stroke-width="1.4"><circle cx="12.5" cy="7" r="5.8" /><path d="M8.5 11.5L.5 19" /></svg>
          <span>Search</span>
        </div>
        <div class="table">
          <svg width="9" height="16" fill="none" stroke="#605e5c" stroke-width="1.4"><path d="M1 1L8 8L1 15" /></svg>
          <svg width="17" height="17" fill="none" stroke="#323130" stroke-width="1.4"><rect x="1" y="1" width="15" height="15" rx="3" /><path d="M1 5.5H16M1 11H16M5.5 1V16M11.5 1V16" /></svg>
          <span>titanic</span>
        </div>
      </aside>
    </main>

    <footer class="status">
      <span class="pageinfo">Page 1 of 1</span>
      <div class="zoombar">
        <svg width="156" height="16" stroke="#605e5c" fill="none"><path d="M1 8H6.5" stroke-width="2" /><path d="M13 8.5H138" stroke-width="1.3" /><path d="M63.5 2V15" stroke-width="5" /><path d="M75.5 4V12.5" stroke-width="1.3" /><path d="M144 8H155M149.5 3V13" stroke-width="1.8" /></svg>
        <span class="pct">83%</span>
        <svg class="fit" width="21" height="17" fill="none" stroke="#605e5c"><rect x="1" y="1" width="19" height="14.5" stroke-width="1.6" /><path d="M4 6.5V4H7M14 4H17V6.5M17 10V12.5H14M7 12.5H4V10" stroke-width="1.3" /></svg>
        <span class="update">Update available (click to download)</span>
      </div>
    </footer>
    <div class="edge"><i class="e1"></i><i class="e2"></i></div>

    <svg class="watermark" width="240" height="120" viewBox="840 900 240 120">
      <text class="wm-ar" x="845" y="966" direction="ltr" textLength="230" lengthAdjust="spacingAndGlyphs">مستقل</text>
      <text class="wm-en" x="844" y="1002" textLength="231" lengthAdjust="spacingAndGlyphs">mostaql.com</text>
    </svg>
  </div>
</template>

<style>
body { margin: 0; overflow: hidden; }
</style>

<style scoped>
.app { position: relative; width: 1920px; height: 1031px; display: flex; flex-direction: column; overflow: hidden; background: #f3f2f1; font-family: "Open Sans", "Noto Sans", sans-serif; font-size: 14px; color: #252423; white-space: nowrap; }
svg { display: block; flex: none; overflow: visible; }
.canvas { overflow: hidden; }
button { border: 0; padding: 0; font: inherit; }

.titlebar { height: 43px; flex: none; display: flex; background: #3b3a38; color: #fff; }
.doc { width: 806px; display: flex; align-items: center; box-sizing: border-box; padding-left: 21px; }
.undo { margin-left: 18px; }
.redo { margin-left: 16px; }
.docname { margin: 6px 8px 0 10px; font-size: 14.4px; width: 278px; line-height: 20px; }
.search { width: 500px; height: 30px; margin-top: 6px; background: #d4d3d1; border-radius: 2px; display: flex; align-items: center; font-size: 16px; color: #4a5957; }
.search svg { margin-left: 21px; }
.search span { margin-left: 13px; line-height: 31px; margin-top: 1px; }
.signin { margin-left: 335px; width: 114px; background: #262524; display: flex; align-items: center; font-size: 14.5px; }
.signin span { margin-left: 12px; width: 57px; }
.winbtns { display: flex; align-items: center; gap: 41px; margin-left: 21px; margin-top: 1px; }

.tabs { height: 45px; flex: none; display: flex; background: #fafafa; padding-left: 28px; position: relative; z-index: 3; font-size: 16.6px; }
.tab { line-height: 39px; margin-right: 39.7px; height: 38px; position: relative; box-sizing: border-box; }
.tab:first-child { margin-right: 46.7px; }
.tab.active { font-weight: 600; border-bottom: 3px solid #117865; letter-spacing: -.3px; }
.share { margin-left: auto; margin-right: 7px; margin-top: 5px; width: 105px; height: 30px; background: #137862; border-radius: 4px; color: #fff; display: flex; align-items: center; font-size: 14px; }
.share svg:first-child { margin-left: 8px; }
.share span { margin: 0 6px 0 8px; }

.ribbon { height: 112px; flex: none; display: flex; background: #fafafa; position: relative; z-index: 2; box-shadow: 0 2px 4px rgba(0, 0, 0, .16); }
.group { height: 110px; box-sizing: border-box; padding-top: 4px; border-right: 1px solid #d2d0ce; display: flex; flex-direction: column; }
.clip { width: 201px; color: #bdbbb9; }
.items, .cliprow { display: flex; flex: 1; }
.gname { height: 12px; line-height: 14px; text-align: center; font-size: 12px; letter-spacing: -.1px; color: #3b3a39; }
.item { display: flex; flex-direction: column; align-items: center; font-size: 13.7px; }
.item.off { color: #bdbbb9; }
.line { line-height: 20px; height: 20px; display: flex; align-items: center; }
.big { margin-bottom: 1px; }
.chev { margin: 3px 2px 0 3px; }
.chev.lone { margin: 0; }
.paste { width: 58px; margin-left: 18px; }
.paste span { display: block; line-height: 20px; width: 34px; text-align: center; margin-top: 1px; font-size: 13.6px; }
.clipactions { margin: -4px 0 0 -11px; }
.clipactions div { display: flex; align-items: center; height: 30px; line-height: 20px; }
.clipactions span { margin-left: 3px; }
.collapse { position: absolute; right: 6px; bottom: 7px; }

.main { height: 800px; flex: none; display: flex; }
.rail { width: 50px; border-right: 1px solid #dad8d6; }
.railbtn { height: 50px; box-sizing: border-box; display: flex; align-items: center; padding-left: 15px; }
.railbtn.active { border-left: 3px solid #117865; padding-left: 12px; }
.center { width: 1417px; display: flex; flex-direction: column; }
.stage { height: 756px; display: flex; background: #fff; }
.filters { width: 40px; border-left: 1px solid #a9a7a5; display: flex; flex-direction: column; align-items: flex-start; }
.filters svg { margin: 16px 0 0 12px; }
.filters .funnelicon { margin: 18px 0 0 16px; }
.filters span { writing-mode: vertical-rl; font-weight: 600; font-size: 16.8px; letter-spacing: .1px; margin: 12px 0 0 9px; line-height: 22px; color: #252423; }
.pages { height: 44px; display: flex; align-items: center; background: #f3f2f1; }
.monitor { margin-left: 13px; width: 30px; height: 27px; border-bottom: 4px solid #117865; display: flex; justify-content: center; align-self: flex-end; margin-bottom: 5px; }
.phone { margin: -7px 0 0 31px; }
.prev { margin: 0 0 0 24px; }
.next { margin: 0 0 0 21px; }
.page { margin-left: 8px; width: 94px; height: 39px; line-height: 45px; background: #fff; border-left: 1px solid #8a8886; border-bottom: 5px solid #117865; text-align: center; font-size: 14.2px; }
.add { width: 49px; height: 40px; background: #137862; display: flex; align-items: center; justify-content: center; }

.hero { font-size: 51px; font-weight: 700; fill: #049ff3; }
.kpi { font-family: Roboto, sans-serif; font-size: 55px; fill: #049ff3; stroke: #049ff3; stroke-width: .5; }
.kpiname { font-size: 16.5px; fill: #605e5c; }
.ctitle { font-family: Roboto, sans-serif; font-size: 15.5px; fill: #252423; }
.atitle { font-family: Roboto, sans-serif; fill: #252423; }
.tick { font-size: 12px; fill: #605e5c; }
.legend { font-size: 13.5px; fill: #605e5c; }
.strong { font-weight: 700; }
.fcat { font-size: 13px; fill: #605e5c; }
.fval { font-size: 13.3px; fill: #fff; letter-spacing: -.2px; }

.viz { width: 225px; border-left: 1px solid #d6d4d2; display: flex; flex-direction: column; }
.panehead { display: flex; justify-content: space-between; align-items: center; height: 30px; margin: 10px 10px 0 10px; font-size: 17.7px; font-weight: 600; }
.build { margin: 7px 0 0 10px; line-height: 22px; font-size: 14.5px; }
.modes { display: flex; gap: 42px; margin: 3px 0 0 10px; }
.mode.on { background: #cfcdcb; border-radius: 2px; }
.notch { margin-top: 5px; }
.grid { display: grid; grid-template-columns: repeat(6, 24px); gap: 11px; margin: 14px 0 0 14px; }
.fields { margin-top: 10px; border-top: 1px solid #d6d4d2; display: flex; flex-direction: column; font-size: 14.2px; }
.label { margin-left: 15px; line-height: 20px; }
.values { margin-top: 11px; }
.drill { margin: 14px 0 3px 15px; color: #3b3a39; font-weight: 500; font-size: 14.4px; }
.well { background: #fff; border: 1px dashed #c2c0be; border-radius: 3px; width: 211px; margin-left: 5px; }
.w1 { height: 33px; line-height: 33px; margin-top: 6px; text-indent: 12px; }
.w2 { height: 30px; line-height: 32px; margin-top: 7px; text-indent: 10px; font-size: 14.4px; }
.opt { display: flex; justify-content: space-between; align-items: center; height: 34px; margin: 0 27px 0 15px; }
.toggle { width: 40px; height: 20px; box-sizing: border-box; border: 1px solid #7a7876; border-radius: 10px; background: #fff; color: #605e5c; display: flex; align-items: center; font-size: 11px; padding-left: 5px; }
.toggle i { width: 10px; height: 10px; border-radius: 5px; background: #605e5c; margin-right: 2px; }
.toggle.on { background: #117865; border-color: #117865; color: #fff; }
.toggle.on i { background: #fff; margin-left: 4px; }

.data { width: 225px; border-left: 1px solid #d6d4d2; }
.data .panehead { margin-left: 10px; }
.dsearch { margin: 17px 0 0 5px; width: 213px; height: 31px; border: 1px solid #605e5c; border-radius: 2px; display: flex; align-items: center; font-size: 16.4px; color: #605e5c; }
.dsearch svg { margin-left: 9px; }
.dsearch span { margin: 1px 0 0 6px; }
.table { display: flex; align-items: center; margin: 16px 0 0 19px; height: 20px; font-size: 13.8px; color: #3b3a39; }
.table svg:nth-child(2) { margin: 0 7px; }

.status { height: 26px; flex: none; border-top: 1px solid #d6d4d2; display: flex; justify-content: space-between; align-items: center; padding: 2px 6px 0 5px; color: #484644; font-size: 14.2px; }
.pageinfo { font-size: 14.5px; }
.zoombar { display: flex; align-items: center; }
.pct { margin-left: 15px; width: 28px; font-size: 13.5px; margin-right: 24px; }
.update { margin-left: 17px; width: 239px; font-size: 14.4px; }
.edge { height: 2px; flex: none; background: #111c22; display: flex; border-top: 1px solid #0c0f10; box-sizing: border-box; }
.edge i { height: 1px; }
.e1 { margin-left: 60px; width: 344px; background: #b9bab4; }
.e2 { width: 16px; background: #c79a3c; }

.watermark { position: absolute; left: 840px; top: 900px; opacity: .42; z-index: 5; }
.wm-ar { font-family: "DejaVu Sans", sans-serif; font-weight: 700; font-size: 74px; fill: #b5b5b5; }
.wm-en { font-weight: 700; font-size: 36px; fill: #b5b5b5; }
</style>
